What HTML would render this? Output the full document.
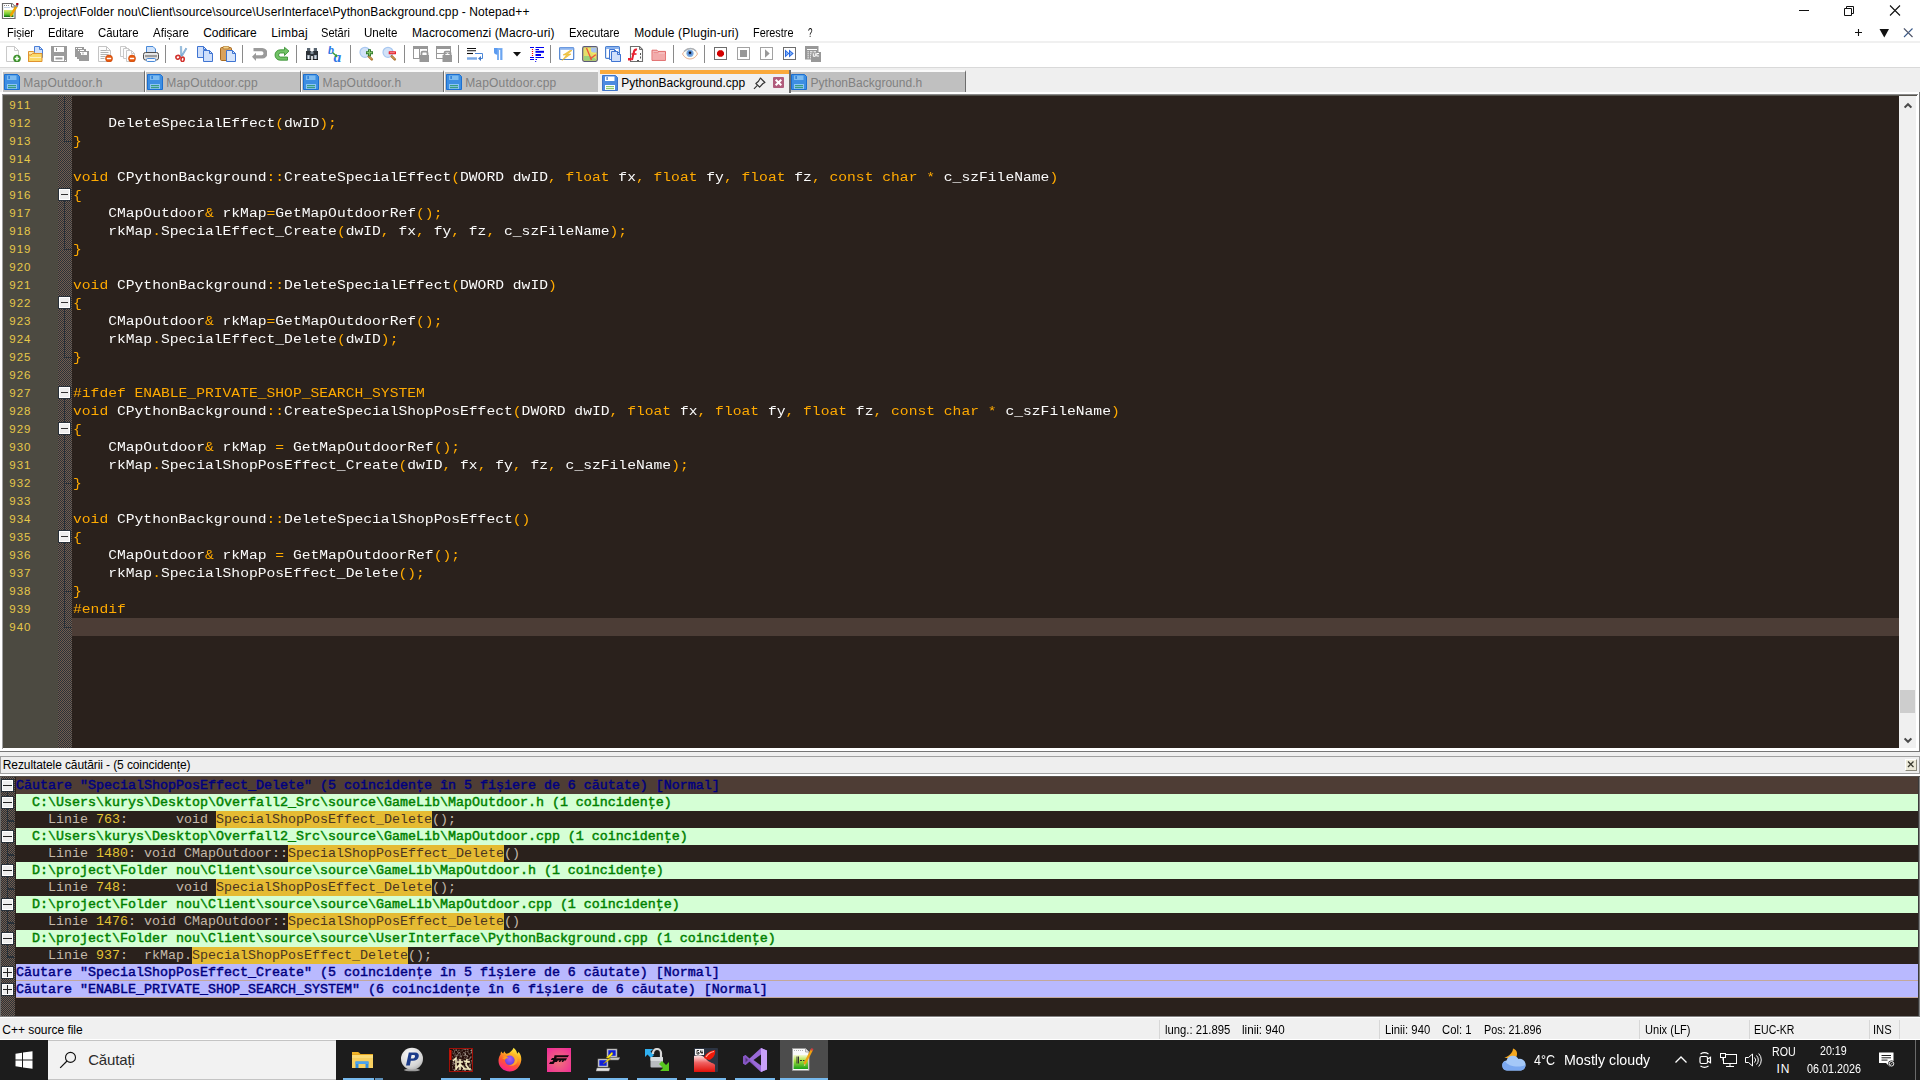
<!DOCTYPE html>
<html><head><meta charset="utf-8"><title>Notepad++</title>
<style>
*{box-sizing:border-box;margin:0;padding:0}
html,body{width:1920px;height:1080px;overflow:hidden;background:#fff;font-family:"Liberation Sans",sans-serif;font-size:12px;color:#000}
.abs{position:absolute}
.t{position:absolute;white-space:nowrap}
#titlebar{position:absolute;left:0;top:0;width:1920px;height:23px;background:#fff}
#menubar{position:absolute;left:0;top:23px;width:1920px;height:19px;background:#fff}
#tbline1{position:absolute;left:0;top:41px;width:1920px;height:2px;background:#f0f0f0}
#toolbar{position:absolute;left:0;top:43px;width:1920px;height:24px;background:#fff}
.ti{position:absolute;top:3px}
.tsep{position:absolute;top:2px;width:1px;height:18px;background:#8a8a8a}
#tbline2{position:absolute;left:0;top:67px;width:1920px;height:1px;background:#d9d9d9}
#tabbar{position:absolute;left:0;top:68px;width:1920px;height:24px;background:#efefef}
.tab{position:absolute;top:2px;height:22px;background:#c0c0c0;border-right:1px solid #6d6d6d;border-top:2px solid #fafafa;box-shadow:-1px 0 0 #fafafa}
.tab.act{background:#f0f0f0;top:2px;height:23px;border-right:2px solid #6d6d6d;border-top:0;box-shadow:none}
.tab.act::before{content:"";position:absolute;left:0;top:0;right:0;height:4px;background:#faa93b;border-bottom:0}
.tab.act::after{content:"";position:absolute;left:0;top:4px;right:0;height:1px;background:#eaf0fa}
/* editor */
#edframe{position:absolute;left:0;top:92px;width:1920px;height:660px;background:#fff;border-right:1px solid #7a7a7a;border-bottom:1px solid #767676}
#edframe::before{content:"";position:absolute;left:2px;top:2px;width:1915px;height:654px;border-left:1px solid #a0a0a0;border-top:1px solid #8a8a8a}
#edframe::after{content:"";position:absolute;left:3px;top:3px;width:1914px;height:1px;background:#55534c}
#editor{position:absolute;left:3px;top:96px;width:1896px;height:652px;background:#2a211c;overflow:hidden}
#gutter{position:absolute;left:0;top:0;width:55px;height:652px;background:#4c4a41}
#foldm{position:absolute;left:55px;top:0;width:14px;height:652px;background:repeating-conic-gradient(#735c4e 0 25%,#2a3238 0 50%) 0 0/2px 2px}
.ln{position:absolute;left:6.3px;height:18px;line-height:18px;font-size:11.5px;color:#e6c84a;letter-spacing:1px;font-kerning:none}
.cl{position:absolute;left:70px;height:18px;line-height:18px;font-family:"Liberation Mono",monospace;font-size:14.667px;color:#fbfbfb;white-space:pre;width:1826px}
.cl.cur{background:#4c3d36;left:69px;width:1827px}
.cl .k{color:#ffaa00}.cl .o{color:#ffaa00}
.cl s{display:inline-block;text-decoration:none;transform:scaleY(.86);transform-origin:0 13.6px}
.fbox{position:absolute;left:56px;width:11px;height:11px;background:#eeeeee;border:1px solid #fff;outline:1px solid #283038}
.fbox i{position:absolute;left:1px;top:4px;width:7px;height:1px;background:#333}
.fv{position:absolute;left:61px;width:1px;background:#283038}
.fh{position:absolute;left:61px;width:7px;height:1px;background:#283038}
/* scrollbar */
#vsb{position:absolute;left:1899px;top:96px;width:17px;height:652px;background:#f0f0f0}
#vsb .thumb{position:absolute;left:1px;top:594px;width:15px;height:23px;background:#cdcdcd}
/* search panel */
#srtitle{position:absolute;left:0;top:756px;width:1920px;height:18px;background:#eeeeee;border:1px solid #a0a0a0}
#srgap{position:absolute;left:0;top:774px;width:1920px;height:3px;background:#fff;border-bottom:1px solid #55504c}
#srx{position:absolute;left:1904px;top:2px;width:12px;height:12px;background:#ece9d8;border-top:1px solid #fff;border-left:1px solid #fff;border-right:1px solid #8a887a;border-bottom:1px solid #8a887a}
#srx svg{position:absolute;left:-1px;top:-1px}
#split1{position:absolute;left:0;top:752px;width:1920px;height:4px;background:#f0f0f0}
.sv{position:absolute;left:7px;width:1px;background:#283038}
.sh{position:absolute;left:7px;width:7px;height:2px;background:#283038}
#srp{position:absolute;left:0;top:777px;width:1920px;height:239px;background:#2a211c;overflow:hidden;border-right:1px solid #808080}
#srp::after{content:"";position:absolute;left:1918px;top:0;width:1px;height:239px;background:#3a3a3a}
#srm{position:absolute;left:0;top:0;width:15px;height:239px;background:repeating-conic-gradient(#735c4e 0 25%,#2a3238 0 50%) 1px 0/2px 2px;border-left:1px solid #707070}
.sr{position:absolute;left:16px;width:1902px;height:17px;line-height:17px;font-family:"Liberation Mono",monospace;font-size:13.333px;white-space:pre;color:#c4b9aa}
.sr.hdr1{background:#4e3d35;color:#000080;-webkit-text-stroke:.45px #000080}
.sr.hdr{background:#b9b9ff;color:#000080;-webkit-text-stroke:.45px #000080;border-bottom:1px solid #c4a89a;line-height:17px}
.sr.file{background:#d5ffd5;color:#008000;-webkit-text-stroke:.45px #008000}
.sr.hit .num{color:#e4c436}
.sr.hit .hl{background:#e5bb33;color:#4a3520;display:inline-block;height:17px}
.fb{position:absolute;left:2px;width:11px;height:11px;background:#eeeeee;border:1px solid #fff;outline:1px solid #283038}
.fb .h{position:absolute;left:0px;top:4px;width:9px;height:1px;background:#222}
.fb .v{position:absolute;left:4px;top:0px;width:1px;height:9px;background:#222}
/* status */
#status{position:absolute;left:0;top:1016px;width:1920px;height:24px;background:#f0f0f0;border-top:1px solid #828282;border-bottom:1px solid #fff;box-shadow:inset 0 1px 0 #fff}
#status i{position:absolute;top:3px;width:1px;height:19px;background:#d7d7d7}
/* taskbar */
#taskbar{position:absolute;left:0;top:1040px;width:1920px;height:40px;background:#1c1c1c}
#tsearch{position:absolute;left:48px;top:0;width:288px;height:40px;background:#f2f2f2;border-top:1px solid #c4c4c4;border-bottom:1px solid #c4c4c4}
.tk{position:absolute;color:#fff;white-space:nowrap;transform-origin:0 0}
.ul{position:absolute;top:38px;height:2px;background:#76b9ed}
</style></head><body>
<div id="titlebar">
<svg class="abs" style="left:1px;top:2px" width="20" height="18" viewBox="0 0 20 18"><path d="M1.500 1.500h9.500l3 3v12h-12.500z" fill="#fff" stroke="#6a6a6a" stroke-width="1.200"/><path d="M10.500 1.500v3.500h3.500" fill="#fff" stroke="#6a6a6a" stroke-width="1"/><path d="M3 3.500h1M5 3.500h1M7 3.500h1" stroke="#8a8a8a" stroke-width="1"/><path d="M3 5.500h6" stroke="#c4d4e8" stroke-width="1"/><defs><linearGradient id="gn" x1="0" y1="0" x2="0" y2="1"><stop offset="0" stop-color="#d8e860"/><stop offset=".6" stop-color="#6cc830"/><stop offset="1" stop-color="#0a6a10"/></linearGradient></defs><rect x="3" y="8" width="9.500" height="7" fill="url(#gn)"/><path d="M16 3.500L9.500 14" stroke="#f0a400" stroke-width="2.400"/><path d="M16.300 2.800l-1.300 2" stroke="#7a90b0" stroke-width="2.200"/><rect x="15.200" y="1" width="2.200" height="2.200" fill="#a80010"/><path d="M9.500 14l-1 1.800 1.800-.8z" fill="#e8d0a0"/></svg>
<span class="t" style="left:23.70px;top:5px;font-size:12px;line-height:15px;letter-spacing:0.093px;color:#000;font-weight:normal;">D:\project\Folder nou\Client\source\source\UserInterface\PythonBackground.cpp - Notepad++</span>
<svg class="abs" style="left:1790px;top:0" width="130" height="23" viewBox="0 0 130 23" fill="none" stroke="#111" stroke-width="1"><path d="M9 10.500h10"/><path d="M54.500 8.500h7v7h-7z"/><path d="M56.500 8.500v-2h7v7h-2"/><path d="M100 5.500l10 10M110 5.500l-10 10" stroke-width="1.100"/></svg>
</div>
<div id="menubar">
<span class="t" style="left:7.00px;top:3px;font-size:12px;line-height:15px;transform:scaleX(0.9204);transform-origin:0 0;color:#000;font-weight:normal;">Fișier</span>
<span class="t" style="left:48.00px;top:3px;font-size:12px;line-height:15px;transform:scaleX(0.9388);transform-origin:0 0;color:#000;font-weight:normal;">Editare</span>
<span class="t" style="left:98.20px;top:3px;font-size:12px;line-height:15px;transform:scaleX(0.9484);transform-origin:0 0;color:#000;font-weight:normal;">Căutare</span>
<span class="t" style="left:153.00px;top:3px;font-size:12px;line-height:15px;transform:scaleX(0.9609);transform-origin:0 0;color:#000;font-weight:normal;">Afișare</span>
<span class="t" style="left:203.20px;top:3px;font-size:12px;line-height:15px;letter-spacing:-0.061px;color:#000;font-weight:normal;">Codificare</span>
<span class="t" style="left:271.20px;top:3px;font-size:12px;line-height:15px;letter-spacing:0.223px;color:#000;font-weight:normal;">Limbaj</span>
<span class="t" style="left:321.20px;top:3px;font-size:12px;line-height:15px;transform:scaleX(0.9224);transform-origin:0 0;color:#000;font-weight:normal;">Setări</span>
<span class="t" style="left:364.20px;top:3px;font-size:12px;line-height:15px;transform:scaleX(0.9653);transform-origin:0 0;color:#000;font-weight:normal;">Unelte</span>
<span class="t" style="left:412.00px;top:3px;font-size:12px;line-height:15px;letter-spacing:0.108px;color:#000;font-weight:normal;">Macrocomenzi (Macro-uri)</span>
<span class="t" style="left:569.20px;top:3px;font-size:12px;line-height:15px;transform:scaleX(0.9346);transform-origin:0 0;color:#000;font-weight:normal;">Executare</span>
<span class="t" style="left:634.20px;top:3px;font-size:12px;line-height:15px;letter-spacing:0.174px;color:#000;font-weight:normal;">Module (Plugin-uri)</span>
<span class="t" style="left:753.20px;top:3px;font-size:12px;line-height:15px;transform:scaleX(0.9066);transform-origin:0 0;color:#000;font-weight:normal;">Ferestre</span>
<span class="t" style="left:808.30px;top:3px;font-size:12px;line-height:15px;transform:scaleX(0.6714);transform-origin:0 0;color:#000;font-weight:normal;">?</span>
<svg class="abs" style="left:1850px;top:2px" width="70" height="16" viewBox="0 0 70 16"><path d="M8.500 4v7M5 7.500h7" stroke="#111" stroke-width="1.100"/><path d="M29.500 4h9.500l-4.700 8.500z" fill="#111"/><path d="M54 3.500l8.500 8.500M62.500 3.500L54 12" stroke="#3a5a8a" stroke-width="1.100"/><path d="M54 3.500l8.500 8.500" stroke="#9a6a3a" stroke-width=".6"/></svg>
</div>
<div id="tbline1"></div><div id="toolbar"><svg class="ti" style="left:5px" width="16" height="16" viewBox="0 0 16 16"><path d="M1.5 0.5h8l4 4v11h-12z" fill="#fdfdfd" stroke="#c9c9c9"/><path d="M9.5 0.5v4h4" fill="none" stroke="#c9c9c9"/><circle cx="12" cy="12.5" r="3.5" fill="#3f9a2b" stroke="#2f7a20" stroke-width=".6"/><path d="M12 10.3v4.4M9.8 12.5h4.4" stroke="#fff" stroke-width="1.5"/></svg>
<svg class="ti" style="left:28px" width="16" height="16" viewBox="0 0 16 16"><path d="M6.5 0.5h5l3 3v8h-8z" fill="#cfe0fb" stroke="#4b7fd6"/><path d="M11.5 0.5v3h3" fill="none" stroke="#4b7fd6"/><path d="M.5 5.5h5l1 1.5h0v8.5h-6z" fill="#fbe7a8" stroke="#e0922f"/><path d="M.5 15.5v-6.5h2.5l1.5-1.5h9.5v8z" fill="#fbd968" stroke="#e0922f"/><path d="M2 11h11v1H2z" fill="#fdf0c0"/></svg>
<svg class="ti" style="left:51px" width="16" height="16" viewBox="0 0 16 16"><path d="M0 0h15l1 0v16h-15l-1-1z" fill="#9b9b9b"/><rect x="3" y="1" width="10" height="5" fill="#fff"/><rect x="5" y="2" width="1" height="3" fill="#9b9b9b"/><rect x="3" y="10" width="10" height="5" fill="#fff"/><rect x="4.5" y="11.5" width="7" height="2" fill="#9b9b9b"/><rect x="14" y="14" width="1" height="1" fill="#fff"/></svg>
<svg class="ti" style="left:74px" width="16" height="16" viewBox="0 0 16 16"><rect x="1" y="1" width="9" height="10" fill="#9b9b9b"/><rect x="4" y="2" width="4" height="1.4" fill="#fff"/><rect x="2" y="2" width="1" height="1" fill="#fff"/><rect x="3" y="3" width="9" height="10" fill="#9b9b9b"/><rect x="6" y="4" width="4" height="1.4" fill="#fff"/><rect x="4" y="4" width="1" height="1" fill="#fff"/><rect x="5" y="5" width="10" height="10" fill="#9b9b9b"/><rect x="8" y="6" width="5" height="1.4" fill="#fff"/><rect x="6" y="6" width="1" height="1" fill="#fff"/><rect x="7" y="6" width="6" height="3" fill="#fff"/><rect x="8.5" y="6.5" width="1" height="2" fill="#9b9b9b"/></svg>
<svg class="ti" style="left:97px" width="16" height="16" viewBox="0 0 16 16"><path d="M1.5 0.5h8l4 4v11h-12z" fill="#fdfdfd" stroke="#c4c4c4"/><path d="M9.5 0.5v4h4" fill="none" stroke="#c4c4c4"/><path d="M3.5 4.5h6M3.5 6.5h8M3.5 8.5h8M3.5 10.5h5M3.5 12.5h4" stroke="#a9a9a9" stroke-width=".9"/><circle cx="12" cy="12.5" r="3.5" fill="#e8580c" stroke="#c54306" stroke-width=".6"/><path d="M9.8 12.5h4.4" stroke="#fff" stroke-width="1.5"/></svg>
<svg class="ti" style="left:120px" width="16" height="16" viewBox="0 0 16 16"><path d="M0.5 0.5h5l3 3v7h-8z" fill="#fdfdfd" stroke="#c9c9c9"/><path d="M5.5 0.5v3h3" fill="none" stroke="#c9c9c9"/><path d="M3.5 2.5h5l3 3v7h-8z" fill="#fdfdfd" stroke="#c9c9c9"/><path d="M8.5 2.5v3h3" fill="none" stroke="#c9c9c9"/><path d="M6.5 4.5h5l3 3v8h-8z" fill="#fdfdfd" stroke="#c9c9c9"/><path d="M11.5 4.5v3h3" fill="none" stroke="#c9c9c9"/><circle cx="12" cy="12.5" r="3.5" fill="#e8580c" stroke="#c54306" stroke-width=".6"/><path d="M9.8 12.5h4.4" stroke="#fff" stroke-width="1.5"/></svg>
<svg class="ti" style="left:143px" width="16" height="16" viewBox="0 0 16 16"><path d="M3.5 7V.5h6.5l2.5 2.5V7z" fill="#cfe2fa" stroke="#4a8ad8"/><rect x=".5" y="6.5" width="15" height="7.5" rx="2" fill="#e6e6e6" stroke="#4d4d4d"/><rect x="2" y="9" width="12" height="2.2" fill="#9c9c9c"/><rect x="3.5" y="12.5" width="9" height="3" rx="1" fill="#f4f8ff" stroke="#4a8ad8"/></svg>
<svg class="ti" style="left:174px" width="16" height="16" viewBox="0 0 16 16"><path d="M6.3 0.3L7.6 0.3L8 10L6.6 11z" fill="#9fc4e4" stroke="#6a9cc6" stroke-width=".5"/><path d="M11.8 2L12.8 2.8L8.3 10.2L7.4 9.4z" fill="#9fc4e4" stroke="#4f86bb" stroke-width=".5"/><ellipse cx="4" cy="11.3" rx="2.1" ry="1.8" fill="none" stroke="#d2322d" stroke-width="1.6" transform="rotate(-20 4 11.3)"/><ellipse cx="8.6" cy="13.3" rx="1.6" ry="2.2" fill="none" stroke="#d2322d" stroke-width="1.6" transform="rotate(10 8.6 13.3)"/></svg>
<svg class="ti" style="left:197px" width="16" height="16" viewBox="0 0 16 16"><path d="M0.5 0.5h6l3 3v8h-9z" fill="#cfdffa" stroke="#3f74d2"/><path d="M6.5 0.5v3h3" fill="none" stroke="#3f74d2"/><path d="M6.5 4.5h6l3 3v8h-9z" fill="#cfdffa" stroke="#3f74d2"/><path d="M12.5 4.5v3h3" fill="none" stroke="#3f74d2"/></svg>
<svg class="ti" style="left:220px" width="16" height="16" viewBox="0 0 16 16"><rect x=".5" y="1.5" width="11" height="13" rx="1.2" fill="#d9a25c" stroke="#a86b22"/><rect x="3" y=".3" width="6" height="2.6" rx=".8" fill="#f3d48a" stroke="#a86b22" stroke-width=".7"/><path d="M6.5 4.5h6l3 3v8h-9z" fill="#d6e5fb" stroke="#3f74d2"/><path d="M12.5 4.5v3h3" fill="none" stroke="#3f74d2"/></svg>
<svg class="ti" style="left:251px" width="16" height="16" viewBox="0 0 16 16"><path d="M1 11l4-4v2.6h5.5a2 2 0 0 0 0-4H2.5v-3.3h8.8a5 5 0 0 1 0 10.4H5v2.6z" fill="#9a9a9a" transform="translate(0 -.3)"/></svg>
<svg class="ti" style="left:274px" width="16" height="16" viewBox="0 0 16 16"><path d="M15 4.5L10.5 .7v2.5H6.2a5.2 5.2 0 0 0 0 10.4h7.3v-3.2H6.6a2 2 0 0 1 0-4h3.9v2.5z" fill="#72c267" stroke="#2f8a2a" stroke-width=".8" transform="translate(0 .6)"/></svg>
<svg class="ti" style="left:305px" width="16" height="16" viewBox="0 0 16 16"><path d="M2 2h3.2v3H2zM8.8 2H12v3H8.8z" fill="#5a6672"/><path d="M1 5h5.2v3H7.8V5H13v9H7.8v-4H6.200v4H1z" fill="#2c3238"/><path d="M5.5 5.5h3v2.5h-3z" fill="#7f8b96"/><path d="M2 9h3.2v4.2H2zM8.800 9H12v4.200H8.800z" fill="#8d99a6"/><path d="M3 9.500h1v3.500H3zM9.800 9.500h1v3.500h-1z" fill="#e6eaee"/><path d="M1 13.200h5.200v.8H1zM7.800 13.200H13v.8H7.800z" fill="#111"/></svg>
<svg class="ti" style="left:328px" width="16" height="16" viewBox="0 0 16 16"><text x="0" y="8" font-family="Liberation Serif" font-style="italic" font-weight="bold" font-size="12" fill="#2d79e6">b</text><text x="5.500" y="15.800" font-family="Liberation Serif" font-style="italic" font-weight="bold" font-size="15.500" fill="#2d79e6">a</text><path d="M4.500 6.500l4 3.500" stroke="#3a9a3a" stroke-width="1.500"/><path d="M9.500 11.200l-3.300-.6 2.500-2.600z" fill="#3a9a3a"/></svg>
<svg class="ti" style="left:359px" width="16" height="16" viewBox="0 0 16 16"><circle cx="6" cy="6.300" r="5" fill="#d2e2f8" stroke="#a9c8f0" stroke-width="1.200"/><path d="M9.800 10.300l3 3" stroke="#a9702c" stroke-width="2.600" stroke-linecap="round"/><path d="M10 10.500l2.600 2.600" stroke="#e0b070" stroke-width="1" stroke-linecap="round"/><path d="M10.500 3.200v7M7 6.700h7" stroke="#2f7a2a" stroke-width="3"/><path d="M10.500 4v5.400M7.800 6.700h5.400" stroke="#86c46f" stroke-width="1.200"/></svg>
<svg class="ti" style="left:382px" width="16" height="16" viewBox="0 0 16 16"><circle cx="6" cy="6.300" r="5" fill="#d2e2f8" stroke="#a9c8f0" stroke-width="1.200"/><path d="M9.800 10.300l3 3" stroke="#a9702c" stroke-width="2.600" stroke-linecap="round"/><path d="M10 10.500l2.600 2.600" stroke="#e0b070" stroke-width="1" stroke-linecap="round"/><rect x="6.700" y="5.200" width="7.300" height="3" rx=".5" fill="#e8202a"/><rect x="7.800" y="6.300" width="5" height=".9" fill="#f6a0a0"/></svg>
<svg class="ti" style="left:413px" width="16" height="16" viewBox="0 0 16 16"><rect x=".5" y=".5" width="14" height="12" fill="#fff" stroke="#989898"/><rect x="0" y="0" width="15" height="3" fill="#989898"/><path d="M6.500 3v10" stroke="#989898"/><rect x="6.500" y="9" width="10" height="7" fill="#989898"/><path d="M8.500 9.500v-2.500a1.300 1.300 0 0 1 1.300-1.300h3.400a1.300 1.300 0 0 1 1.300 1.300v2.500" fill="none" stroke="#989898" stroke-width="1.800"/><path d="M9.500 9l2-2 2 2z" fill="#fff"/></svg>
<svg class="ti" style="left:436px" width="16" height="16" viewBox="0 0 16 16"><rect x=".5" y=".5" width="14" height="12" fill="#fff" stroke="#989898"/><rect x="0" y="0" width="15" height="3" fill="#989898"/><path d="M0 7.500h15" stroke="#989898"/><rect x="6.500" y="9" width="10" height="7" fill="#989898"/><path d="M8.500 9.500v-2.500a1.300 1.300 0 0 1 1.300-1.300h3.400a1.300 1.300 0 0 1 1.300 1.300v2.500" fill="none" stroke="#989898" stroke-width="1.800"/><path d="M9.500 9l2-2 2 2z" fill="#fff"/></svg>
<svg class="ti" style="left:467px" width="16" height="16" viewBox="0 0 16 16"><path d="M0 2.500h9M0 4.800h9" stroke="#111" stroke-width="1.100"/><path d="M0 7.500h6" stroke="#111" stroke-width="1.100"/><path d="M8 7.500h7.500v5h-3" fill="none" stroke="#4a86d8" stroke-width="1"/><path d="M11 12.500l3-2.500v5z" fill="#3f78c8"/><rect x="0" y="11" width="10" height="3" fill="#9cc0ee"/><rect x="0" y="12" width="10" height="1" fill="#7aa8e4"/></svg>
<svg class="ti" style="left:490px" width="16" height="16" viewBox="0 0 16 16"><path d="M4 2h8.500v12h-2V4h-1.500v10h-2V8.500A3.300 3.300 0 0 1 4 5.200z" fill="#7db0f2"/><path d="M4 2h3.500v6.500A3.300 3.300 0 0 1 4 5.200z" fill="#5a9af0"/><path d="M11 3v11" stroke="#5a9af0" stroke-width="1"/></svg>
<svg class="ti" style="left:529px" width="16" height="16" viewBox="0 0 16 16"><path d="M1 1.500h4M6.500 1.500h8.500" stroke="#0000f0" stroke-width="1.200"/><path d="M6.500 3.500h3.500" stroke="#0000f0" stroke-width="1"/><path d="M6.500 5.800h8.500" stroke="#0000f0" stroke-width="2"/><path d="M6.500 9h5.500" stroke="#0000f0" stroke-width="2"/><path d="M1 11.500h4M6.500 11.500h8.500M1 13.500h4M6.500 13.500h1.500" stroke="#0000f0" stroke-width="1.200"/><rect x="6.200" y="15" width="1" height="1" fill="#0000f0"/><path d="M3.500 3v7" stroke="#f00" stroke-width="1.200" stroke-dasharray="1 1"/></svg>
<svg class="ti" style="left:559px" width="16" height="16" viewBox="0 0 16 16"><rect x=".7" y="1.500" width="14" height="12" rx="1" fill="#fff" stroke="#4a80d0" stroke-width="1.200"/><rect x="1" y="1.500" width="13.500" height="2.300" fill="#8db4ee"/><path d="M11 4.500L4 9h3.500L3 14.500l9-6.500H8.500L13 4.500z" fill="#f2cb4a" stroke="#e0a820" stroke-width=".5"/></svg>
<svg class="ti" style="left:582px" width="16" height="16" viewBox="0 0 16 16"><rect x=".7" y=".7" width="14.600" height="14.600" rx="1.500" fill="#e6de6a" stroke="#5a5a78" stroke-width="1.200"/><rect x="9" y="1.500" width="5.600" height="5" fill="#a9c4ee"/><path d="M2 10h7l5 3v1.500H2z" fill="#9ad27a"/><path d="M4.500 2l5 12M8 13l6-4.500" stroke="#f0523a" stroke-width="1.300"/><path d="M6 2l4 5 4.500 1" stroke="#f6ee60" stroke-width="1" fill="none"/></svg>
<svg class="ti" style="left:605px" width="16" height="16" viewBox="0 0 16 16"><rect x=".6" y=".6" width="13.800" height="11.800" rx="1" fill="#fff" stroke="#4a80d0" stroke-width="1.200"/><rect x="1" y="1" width="13" height="2" fill="#8db4ee"/><path d="M4.5 3.5h5l3 3v7h-8z" fill="#e6effc" stroke="#3f74d2"/><path d="M9.5 3.5v3h3" fill="none" stroke="#3f74d2"/><path d="M6.5 5.5h6l3 3v7h-9z" fill="#cfdffa" stroke="#3f74d2"/><path d="M12.5 5.5v3h3" fill="none" stroke="#3f74d2"/></svg>
<svg class="ti" style="left:628px" width="16" height="16" viewBox="0 0 16 16"><path d="M2.500 .5h9l3 3v12h-12z" fill="#fff" stroke="#6e6e6e" stroke-width="1.100"/><path d="M11.500 .5v3h3" fill="none" stroke="#6e6e6e"/><path d="M12.500 7v6M11 14.500h-3" stroke="#555" stroke-width="1" stroke-dasharray="2 1.500"/><path d="M9 3.500c-2.500-.5-3 1.500-3.500 4l-1.500 6.500" stroke="#e82030" stroke-width="2" fill="none"/><path d="M3.500 8h5" stroke="#e82030" stroke-width="1.600"/><rect x="0" y="12" width="3.500" height="2.500" fill="#e82030"/></svg>
<svg class="ti" style="left:651px" width="16" height="16" viewBox="0 0 16 16"><path d="M1 4.200h5l1 1.200h7.500v9h-13.500z" fill="#f4bcbc" stroke="#e06a6a" stroke-width="1"/><path d="M1.500 8h13v6h-13z" fill="#f0a0a0" opacity=".6"/><path d="M2.500 6.800h5" stroke="#e88080" stroke-width="1"/></svg>
<svg class="ti" style="left:682px" width="16" height="16" viewBox="0 0 16 16"><path d="M.5 8C3 3.500 6 2.500 8.500 2.500S14 4 15.500 8c-2 3.500-4.500 5-7.500 5S2.500 11.500.5 8z" fill="#fdfdf6" stroke="#e8b090" stroke-width="1"/><path d="M2 5.500C4.500 3 6.500 2.500 8.500 2.500s4 .8 5.500 2.500" fill="none" stroke="#a8b0b8" stroke-width="1.300"/><circle cx="8" cy="7.300" r="3.600" fill="#7aaae0"/><circle cx="8" cy="7.300" r="2.300" fill="#5a8ad0"/><circle cx="8" cy="6.800" r="1.200" fill="#101018"/></svg>
<svg class="ti" style="left:713px" width="16" height="16" viewBox="0 0 16 16"><rect x="1.500" y="1.500" width="12" height="12" fill="#fff" stroke="#6e6e6e" stroke-width="1"/><path d="M6 4.300h3l2 2v2.400l-2 2h-3l-2-2V6.300z" fill="#d40000"/></svg>
<svg class="ti" style="left:736px" width="16" height="16" viewBox="0 0 16 16"><rect x="1.500" y="1.500" width="12" height="12" fill="#fff" stroke="#a2a2a2" stroke-width="1"/><rect x="4" y="4" width="7" height="7" fill="#989898"/></svg>
<svg class="ti" style="left:759px" width="16" height="16" viewBox="0 0 16 16"><rect x="1.500" y="1.500" width="12" height="12" fill="#fff" stroke="#a2a2a2" stroke-width="1"/><path d="M6 3.300L10.700 7.500 6 11.700z" fill="#989898"/></svg>
<svg class="ti" style="left:782px" width="16" height="16" viewBox="0 0 16 16"><rect x="1.500" y="1.500" width="12" height="12" fill="#fff" stroke="#6e6e6e" stroke-width="1"/><path d="M3 3.500L7.400 7.500 3 11.500zM7 3.500L11.700 7.500 7 11.500z" fill="#2a6ae0"/><path d="M4 5.500L6.200 7.500 4 9.500zM8 5.500L10.200 7.500 8 9.500z" fill="#7fb0f6"/></svg>
<svg class="ti" style="left:805px" width="16" height="16" viewBox="0 0 16 16"><rect x="0" y="0" width="13.500" height="13.500" fill="#989898"/><rect x="6" y="6" width="10" height="10" fill="#989898"/><path d="M2 3.500h10" stroke="#fff" stroke-width="1"/><path d="M2.500 5.800h1.300M5 5.800h2.500M8.500 5.800h2.500M2.500 7.800h1.300M5 7.800h1.500M2.500 9.800h1.300M5 9.800h1M2.500 11.800h1.300M5 11.800h1" stroke="#fff" stroke-width="1"/><path d="M8.300 7.300v3h2v-3M11.500 7.500h2.500M11.500 10h2.500M11.800 7.500v2.500" stroke="#fff" stroke-width="1" fill="none"/></svg>
<i class="tsep" style="left:165px"></i>
<i class="tsep" style="left:242px"></i>
<i class="tsep" style="left:296px"></i>
<i class="tsep" style="left:350px"></i>
<i class="tsep" style="left:404px"></i>
<i class="tsep" style="left:458px"></i>
<i class="tsep" style="left:550px"></i>
<i class="tsep" style="left:673px"></i>
<i class="tsep" style="left:704px"></i>
<svg class="ti" style="left:513px;top:9px" width="8" height="5" viewBox="0 0 8 5"><path d="M0 0h8L4 4.500z" fill="#111"/></svg></div><div id="tbline2"></div>
<div id="edframe"></div>
<div id="tabbar">
<div class="tab" style="left:3px;width:142px"></div>
<svg class="abs" style="left:4px;top:6px" width="16" height="16" viewBox="0 0 16 16"><path d="M.5 .5h13l2 2v13h-15z" fill="#3d8ee2" stroke="#1b6fd0" stroke-width="1"/><rect x="3" y="1.500" width="9.500" height="4.500" fill="#7dbbf0"/><rect x="4.500" y="2" width="1.200" height="3" fill="#1b6fd0"/><rect x="3" y="10" width="10" height="5" fill="#8cc5f5"/><rect x="4" y="11" width="8" height="1.200" fill="#3a9d80"/><rect x="4" y="13" width="8" height="1.200" fill="#3a9d80"/></svg>
<span class="t" style="left:23.30px;top:7.5px;font-size:12px;line-height:15px;letter-spacing:0.275px;color:#808080;font-weight:normal;">MapOutdoor.h</span>
<div class="tab" style="left:146px;width:155px"></div>
<svg class="abs" style="left:147px;top:6px" width="16" height="16" viewBox="0 0 16 16"><path d="M.5 .5h13l2 2v13h-15z" fill="#3d8ee2" stroke="#1b6fd0" stroke-width="1"/><rect x="3" y="1.500" width="9.500" height="4.500" fill="#7dbbf0"/><rect x="4.500" y="2" width="1.200" height="3" fill="#1b6fd0"/><rect x="3" y="10" width="10" height="5" fill="#8cc5f5"/><rect x="4" y="11" width="8" height="1.200" fill="#3a9d80"/><rect x="4" y="13" width="8" height="1.200" fill="#3a9d80"/></svg>
<span class="t" style="left:166.30px;top:7.5px;font-size:12px;line-height:15px;letter-spacing:0.204px;color:#808080;font-weight:normal;">MapOutdoor.cpp</span>
<div class="tab" style="left:302px;width:142px"></div>
<svg class="abs" style="left:303px;top:6px" width="16" height="16" viewBox="0 0 16 16"><path d="M.5 .5h13l2 2v13h-15z" fill="#3d8ee2" stroke="#1b6fd0" stroke-width="1"/><rect x="3" y="1.500" width="9.500" height="4.500" fill="#7dbbf0"/><rect x="4.500" y="2" width="1.200" height="3" fill="#1b6fd0"/><rect x="3" y="10" width="10" height="5" fill="#8cc5f5"/><rect x="4" y="11" width="8" height="1.200" fill="#3a9d80"/><rect x="4" y="13" width="8" height="1.200" fill="#3a9d80"/></svg>
<span class="t" style="left:322.50px;top:7.5px;font-size:12px;line-height:15px;letter-spacing:0.248px;color:#808080;font-weight:normal;">MapOutdoor.h</span>
<div class="tab" style="left:445px;width:153px;border-right:0"></div>
<svg class="abs" style="left:446px;top:6px" width="16" height="16" viewBox="0 0 16 16"><path d="M.5 .5h13l2 2v13h-15z" fill="#3d8ee2" stroke="#1b6fd0" stroke-width="1"/><rect x="3" y="1.500" width="9.500" height="4.500" fill="#7dbbf0"/><rect x="4.500" y="2" width="1.200" height="3" fill="#1b6fd0"/><rect x="3" y="10" width="10" height="5" fill="#8cc5f5"/><rect x="4" y="11" width="8" height="1.200" fill="#3a9d80"/><rect x="4" y="13" width="8" height="1.200" fill="#3a9d80"/></svg>
<span class="t" style="left:465.20px;top:7.5px;font-size:12px;line-height:15px;letter-spacing:0.181px;color:#808080;font-weight:normal;">MapOutdoor.cpp</span>
<div class="tab act" style="left:600px;width:191px"></div>
<svg class="abs" style="left:602px;top:6.5px" width="16" height="16" viewBox="0 0 16 16"><path d="M.5 .5h13l2 2v13h-15z" fill="#4c8ae0" stroke="#3f74c8" stroke-width="1"/><rect x="3" y="1.500" width="9.500" height="4.500" fill="#ffffff"/><rect x="4.500" y="2" width="1.200" height="3" fill="#3f74c8"/><rect x="3" y="10" width="10" height="5" fill="#ffffff"/><rect x="4" y="11" width="8" height="1.200" fill="#8fc86a"/><rect x="4" y="13" width="8" height="1.200" fill="#8fc86a"/></svg>
<span class="t" style="left:621.30px;top:7.5px;font-size:12px;line-height:15px;letter-spacing:-0.011px;color:#000;font-weight:normal;">PythonBackground.cpp</span>
<svg class="abs" style="left:753px;top:8.600px" width="13" height="13" viewBox="0 0 13 13" fill="none" stroke="#333" stroke-width="1.150"><path d="M7.400 1L11.900 5.500 10 6.500 6.600 10.100 2.900 6.500 5.500 4.200z" stroke-linejoin="round"/><path d="M4.400 8.400L1 11.800"/></svg>
<svg class="abs" style="left:773px;top:9px" width="12" height="11" viewBox="0 0 12 11"><rect width="11" height="11" rx="1" fill="#b05c7c"/><path d="M2.700 2.700l5.600 5.600M8.300 2.700L2.700 8.300" stroke="#fff" stroke-width="2"/></svg>
<div class="tab" style="left:791px;width:175px;box-shadow:none"></div>
<svg class="abs" style="left:791px;top:6px" width="16" height="16" viewBox="0 0 16 16"><path d="M.5 .5h13l2 2v13h-15z" fill="#3d8ee2" stroke="#1b6fd0" stroke-width="1"/><rect x="3" y="1.500" width="9.500" height="4.500" fill="#7dbbf0"/><rect x="4.500" y="2" width="1.200" height="3" fill="#1b6fd0"/><rect x="3" y="10" width="10" height="5" fill="#8cc5f5"/><rect x="4" y="11" width="8" height="1.200" fill="#3a9d80"/><rect x="4" y="13" width="8" height="1.200" fill="#3a9d80"/></svg>
<span class="t" style="left:810.60px;top:7.5px;font-size:12px;line-height:15px;letter-spacing:0.010px;color:#808080;font-weight:normal;">PythonBackground.h</span>
</div>
<div id="editor">
<div id="gutter"></div><div id="foldm"></div>
<div class="fv" style="top:0px;height:46px"></div>
<div class="fh" style="top:45px"></div>
<div class="fbox" style="top:93px"><i></i></div>
<div class="fv" style="top:104px;height:50px"></div>
<div class="fh" style="top:153px"></div>
<div class="fbox" style="top:201px"><i></i></div>
<div class="fv" style="top:212px;height:50px"></div>
<div class="fh" style="top:261px"></div>
<div class="fbox" style="top:291px"><i></i></div>
<div class="fv" style="top:302px;height:25px"></div>
<div class="fbox" style="top:327px"><i></i></div>
<div class="fv" style="top:338px;height:97px"></div>
<div class="fh" style="top:387px"></div>
<div class="fbox" style="top:435px"><i></i></div>
<div class="fv" style="top:446px;height:86px"></div>
<div class="fh" style="top:495px"></div>
<div class="fh" style="top:531px"></div>
<div class="ln" style="top:0px">911</div>
<div class="ln" style="top:18px">912</div>
<div class="ln" style="top:36px">913</div>
<div class="ln" style="top:54px">914</div>
<div class="ln" style="top:72px">915</div>
<div class="ln" style="top:90px">916</div>
<div class="ln" style="top:108px">917</div>
<div class="ln" style="top:126px">918</div>
<div class="ln" style="top:144px">919</div>
<div class="ln" style="top:162px">920</div>
<div class="ln" style="top:180px">921</div>
<div class="ln" style="top:198px">922</div>
<div class="ln" style="top:216px">923</div>
<div class="ln" style="top:234px">924</div>
<div class="ln" style="top:252px">925</div>
<div class="ln" style="top:270px">926</div>
<div class="ln" style="top:288px">927</div>
<div class="ln" style="top:306px">928</div>
<div class="ln" style="top:324px">929</div>
<div class="ln" style="top:342px">930</div>
<div class="ln" style="top:360px">931</div>
<div class="ln" style="top:378px">932</div>
<div class="ln" style="top:396px">933</div>
<div class="ln" style="top:414px">934</div>
<div class="ln" style="top:432px">935</div>
<div class="ln" style="top:450px">936</div>
<div class="ln" style="top:468px">937</div>
<div class="ln" style="top:486px">938</div>
<div class="ln" style="top:504px">939</div>
<div class="ln" style="top:522px">940</div>
<div class="cl" style="top:0px"></div>
<div class="cl" style="top:18px"><s>    DeleteSpecialEffect<span class="o">(</span>dwID<span class="o">);</span></s></div>
<div class="cl" style="top:36px"><s><span class="o">}</span></s></div>
<div class="cl" style="top:54px"></div>
<div class="cl" style="top:72px"><s><span class="k">void</span> CPythonBackground<span class="o">::</span>CreateSpecialEffect<span class="o">(</span>DWORD dwID<span class="o">,</span> <span class="k">float</span> fx<span class="o">,</span> <span class="k">float</span> fy<span class="o">,</span> <span class="k">float</span> fz<span class="o">,</span> <span class="k">const</span> <span class="k">char</span> <span class="o">*</span> c_szFileName<span class="o">)</span></s></div>
<div class="cl" style="top:90px"><s><span class="o">{</span></s></div>
<div class="cl" style="top:108px"><s>    CMapOutdoor<span class="o">&amp;</span> rkMap<span class="o">=</span>GetMapOutdoorRef<span class="o">();</span></s></div>
<div class="cl" style="top:126px"><s>    rkMap<span class="o">.</span>SpecialEffect_Create<span class="o">(</span>dwID<span class="o">,</span> fx<span class="o">,</span> fy<span class="o">,</span> fz<span class="o">,</span> c_szFileName<span class="o">);</span></s></div>
<div class="cl" style="top:144px"><s><span class="o">}</span></s></div>
<div class="cl" style="top:162px"></div>
<div class="cl" style="top:180px"><s><span class="k">void</span> CPythonBackground<span class="o">::</span>DeleteSpecialEffect<span class="o">(</span>DWORD dwID<span class="o">)</span></s></div>
<div class="cl" style="top:198px"><s><span class="o">{</span></s></div>
<div class="cl" style="top:216px"><s>    CMapOutdoor<span class="o">&amp;</span> rkMap<span class="o">=</span>GetMapOutdoorRef<span class="o">();</span></s></div>
<div class="cl" style="top:234px"><s>    rkMap<span class="o">.</span>SpecialEffect_Delete<span class="o">(</span>dwID<span class="o">);</span></s></div>
<div class="cl" style="top:252px"><s><span class="o">}</span></s></div>
<div class="cl" style="top:270px"></div>
<div class="cl" style="top:288px"><s><span class="k">#ifdef ENABLE_PRIVATE_SHOP_SEARCH_SYSTEM</span></s></div>
<div class="cl" style="top:306px"><s><span class="k">void</span> CPythonBackground<span class="o">::</span>CreateSpecialShopPosEffect<span class="o">(</span>DWORD dwID<span class="o">,</span> <span class="k">float</span> fx<span class="o">,</span> <span class="k">float</span> fy<span class="o">,</span> <span class="k">float</span> fz<span class="o">,</span> <span class="k">const</span> <span class="k">char</span> <span class="o">*</span> c_szFileName<span class="o">)</span></s></div>
<div class="cl" style="top:324px"><s><span class="o">{</span></s></div>
<div class="cl" style="top:342px"><s>    CMapOutdoor<span class="o">&amp;</span> rkMap <span class="o">=</span> GetMapOutdoorRef<span class="o">();</span></s></div>
<div class="cl" style="top:360px"><s>    rkMap<span class="o">.</span>SpecialShopPosEffect_Create<span class="o">(</span>dwID<span class="o">,</span> fx<span class="o">,</span> fy<span class="o">,</span> fz<span class="o">,</span> c_szFileName<span class="o">);</span></s></div>
<div class="cl" style="top:378px"><s><span class="o">}</span></s></div>
<div class="cl" style="top:396px"></div>
<div class="cl" style="top:414px"><s><span class="k">void</span> CPythonBackground<span class="o">::</span>DeleteSpecialShopPosEffect<span class="o">()</span></s></div>
<div class="cl" style="top:432px"><s><span class="o">{</span></s></div>
<div class="cl" style="top:450px"><s>    CMapOutdoor<span class="o">&amp;</span> rkMap <span class="o">=</span> GetMapOutdoorRef<span class="o">();</span></s></div>
<div class="cl" style="top:468px"><s>    rkMap<span class="o">.</span>SpecialShopPosEffect_Delete<span class="o">();</span></s></div>
<div class="cl" style="top:486px"><s><span class="o">}</span></s></div>
<div class="cl" style="top:504px"><s><span class="k">#endif</span></s></div>
<div class="cl cur" style="top:522px"></div>
</div>
<div id="vsb"><div class="thumb"></div><svg class="abs" style="left:4.500px;top:5.500px" width="8" height="7" viewBox="0 0 8 7"><path d="M.600 5.600L4 2.200 7.400 5.600" fill="none" stroke="#4a4a4a" stroke-width="2"/></svg><svg class="abs" style="left:4.500px;top:640.500px" width="8" height="7" viewBox="0 0 8 7"><path d="M.600 1.400L4 4.800 7.400 1.400" fill="none" stroke="#4a4a4a" stroke-width="2"/></svg></div>
<div id="split1"></div>
<div id="srtitle">
<span class="t" style="left:1.80px;top:1px;font-size:12px;line-height:15px;letter-spacing:-0.101px;color:#000;font-weight:normal;">Rezultatele căutării - (5 coincidențe)</span>
<div id="srx"><svg width="12" height="11" viewBox="0 0 12 11"><path d="M3 2.500l5.500 5.500M8.500 2.500L3 8" stroke="#3a3a30" stroke-width="1.300"/></svg></div>
</div><div id="srgap"></div>
<div id="srp">
<div id="srm"></div>
<div class="sv" style="top:14px;height:166px"></div>
<div class="sh" style="top:43px"></div>
<div class="sh" style="top:77px"></div>
<div class="sh" style="top:111px"></div>
<div class="sh" style="top:145px"></div>
<div class="sh" style="top:179px"></div>
<div class="sr hdr1" style="top:0px">Căutare "SpecialShopPosEffect_Delete" (5 coincidențe în 5 fișiere de 6 căutate) [Normal]</div>
<div class="fb" style="top:3px"><i class="h"></i></div>
<div class="sr file" style="top:17px">  C:\Users\kurys\Desktop\Overfall2_Src\source\GameLib\MapOutdoor.h (1 coincidențe)</div>
<div class="fb" style="top:20px"><i class="h"></i></div>
<div class="sr hit" style="top:34px">    Linie <span class="num">763</span>:      void <span class="hl">SpecialShopPosEffect_Delete</span>();</div>
<div class="sr file" style="top:51px">  C:\Users\kurys\Desktop\Overfall2_Src\source\GameLib\MapOutdoor.cpp (1 coincidențe)</div>
<div class="fb" style="top:54px"><i class="h"></i></div>
<div class="sr hit" style="top:68px">    Linie <span class="num">1480</span>: void CMapOutdoor::<span class="hl">SpecialShopPosEffect_Delete</span>()</div>
<div class="sr file" style="top:85px">  D:\project\Folder nou\Client\source\source\GameLib\MapOutdoor.h (1 coincidențe)</div>
<div class="fb" style="top:88px"><i class="h"></i></div>
<div class="sr hit" style="top:102px">    Linie <span class="num">748</span>:      void <span class="hl">SpecialShopPosEffect_Delete</span>();</div>
<div class="sr file" style="top:119px">  D:\project\Folder nou\Client\source\source\GameLib\MapOutdoor.cpp (1 coincidențe)</div>
<div class="fb" style="top:122px"><i class="h"></i></div>
<div class="sr hit" style="top:136px">    Linie <span class="num">1476</span>: void CMapOutdoor::<span class="hl">SpecialShopPosEffect_Delete</span>()</div>
<div class="sr file" style="top:153px">  D:\project\Folder nou\Client\source\source\UserInterface\PythonBackground.cpp (1 coincidențe)</div>
<div class="fb" style="top:156px"><i class="h"></i></div>
<div class="sr hit" style="top:170px">    Linie <span class="num">937</span>:  rkMap.<span class="hl">SpecialShopPosEffect_Delete</span>();</div>
<div class="sr hdr" style="top:187px">Căutare "SpecialShopPosEffect_Create" (5 coincidențe în 5 fișiere de 6 căutate) [Normal]</div>
<div class="fb" style="top:190px"><i class="h"></i><i class="v"></i></div>
<div class="sr hdr" style="top:204px">Căutare "ENABLE_PRIVATE_SHOP_SEARCH_SYSTEM" (6 coincidențe în 6 fișiere de 6 căutate) [Normal]</div>
<div class="fb" style="top:207px"><i class="h"></i><i class="v"></i></div>
</div>
<div id="status">
<span class="t" style="left:2.30px;top:6px;font-size:12px;line-height:15px;letter-spacing:-0.024px;color:#000;font-weight:normal;">C++ source file</span>
<span class="t" style="left:1164.50px;top:6px;font-size:12px;line-height:15px;transform:scaleX(0.9395);transform-origin:0 0;color:#000;font-weight:normal;">lung.: 21.895</span>
<span class="t" style="left:1242.00px;top:6px;font-size:12px;line-height:15px;transform:scaleX(0.9695);transform-origin:0 0;color:#000;font-weight:normal;">linii: 940</span>
<span class="t" style="left:1384.50px;top:6px;font-size:12px;line-height:15px;transform:scaleX(0.9408);transform-origin:0 0;color:#000;font-weight:normal;">Linii: 940</span>
<span class="t" style="left:1442.00px;top:6px;font-size:12px;line-height:15px;transform:scaleX(0.9377);transform-origin:0 0;color:#000;font-weight:normal;">Col: 1</span>
<span class="t" style="left:1484.30px;top:6px;font-size:12px;line-height:15px;transform:scaleX(0.8963);transform-origin:0 0;color:#000;font-weight:normal;">Pos: 21.896</span>
<span class="t" style="left:1644.50px;top:6px;font-size:12px;line-height:15px;transform:scaleX(0.9222);transform-origin:0 0;color:#000;font-weight:normal;">Unix (LF)</span>
<span class="t" style="left:1754.30px;top:6px;font-size:12px;line-height:15px;transform:scaleX(0.8784);transform-origin:0 0;color:#000;font-weight:normal;">EUC-KR</span>
<span class="t" style="left:1873.30px;top:6px;font-size:12px;line-height:15px;transform:scaleX(0.9316);transform-origin:0 0;color:#000;font-weight:normal;">INS</span>
<i style="left:1159px"></i>
<i style="left:1379px"></i>
<i style="left:1639px"></i>
<i style="left:1749px"></i>
<i style="left:1869px"></i>
<i style="left:1899px"></i>
</div>
<div id="taskbar">
<svg class="abs" style="left:15px;top:11px" width="18" height="18" viewBox="0 0 18 18"><path d="M.5 2.700L7 1.700v6.800H.500zM8 1.600L17.500 .200v8.300H8zM.500 9.500H7v6.800L.500 15.300zM8 9.500h9.500v8.300L8 16.400z" fill="#fff"/></svg>
<div id="tsearch"></div>
<svg class="abs" style="left:58px;top:10px" width="20" height="20" viewBox="0 0 20 20"><circle cx="12.500" cy="7.400" r="5" fill="none" stroke="#111" stroke-width="1.100"/><path d="M9 11L2.200 17.800" stroke="#111" stroke-width="1.200"/></svg>
<span class="t" style="left:88.20px;top:11px;font-size:15px;line-height:18px;letter-spacing:-0.149px;color:#2b2b2b;font-weight:normal;">Căutați</span>
<div class="abs" style="left:780px;top:0;width:48px;height:40px;background:#4c4c4c"></div>
<svg class="abs" style="left:351px;top:9px" width="24" height="22" viewBox="0 0 24 22"><path d="M1 3.500h7l1.500 1.500H22v4H1z" fill="#e8a820"/><path d="M1 3h6.500v2H1z" fill="#f0b428"/><path d="M1 6h21v13H1z" fill="#f8d060"/><path d="M1 6h21v3H1z" fill="#fbdc78"/><path d="M4.500 19v-6.500h13V19h-3v-4h-7v4z" fill="#2f8de0"/><path d="M4.500 12.500h13v2.500h-13z" fill="#4ba4f0"/></svg>
<svg class="abs" style="left:400px;top:7px" width="24" height="25" viewBox="0 0 24 25"><ellipse cx="12" cy="23" rx="8" ry="1.300" fill="#9a9a9a"/><defs><radialGradient id="pm" cx=".4" cy=".3" r=".8"><stop offset="0" stop-color="#fafafa"/><stop offset=".7" stop-color="#d4d4d4"/><stop offset="1" stop-color="#a8a8a8"/></radialGradient></defs><circle cx="12" cy="11.700" r="11" fill="url(#pm)"/><path d="M8.800 5.500h6.200c3 0 4.300 1.800 3.700 4.300-.6 2.700-2.800 4-5.700 4h-2.200l-1 4.700H6zm2.800 2.600l-.8 3.500h1.700c1.300 0 2.200-.6 2.500-1.800.3-1.100-.3-1.700-1.500-1.700z" fill="#1c3c8a"/></svg>
<svg class="abs" style="left:449px;top:8px" width="24" height="24" viewBox="0 0 24 24"><defs><filter id="nz" x="0" y="0" width="1" height="1"><feTurbulence type="fractalNoise" baseFrequency=".45" numOctaves="2" seed="7"/><feColorMatrix values="0 0 0 0 .75  0 0 0 0 .7  0 0 0 0 .62  1.8 0 0 0 -.75"/></filter></defs><rect width="24" height="24" fill="#a01008"/><rect x="1" y="1" width="22" height="22" fill="#240c08"/><rect x="3" y="1.500" width="19.500" height="21" filter="url(#nz)"/><path d="M1.500 2v10" stroke="#d81808" stroke-width="2"/><path d="M4 13l3-3v12M8 14h6M11 11v11M11 16l-4 5M11 16l5 5M15 13l6 1M18 11l-1 6 4 5M14 21h8" stroke="#f2ecc0" stroke-width="1.500" fill="none"/></svg>
<svg class="abs" style="left:497px;top:7px" width="26" height="26" viewBox="0 0 26 26"><defs><linearGradient id="ff1" x1=".7" y1="0" x2=".25" y2="1"><stop offset="0" stop-color="#fff044"/><stop offset=".3" stop-color="#ffb020"/><stop offset=".6" stop-color="#ff5a30"/><stop offset=".85" stop-color="#ff3070"/><stop offset="1" stop-color="#e020a0"/></linearGradient><radialGradient id="ff2" cx=".5" cy=".35" r=".7"><stop offset="0" stop-color="#b060f0"/><stop offset="1" stop-color="#5a3ae0"/></radialGradient></defs><path d="M16.500 .8c2.500 2 3.500 4.200 3.600 6 .8-.6 1.200-1.300 1.300-2 2.200 2.300 3.300 5.500 2.800 9C23.300 20 18.500 24.500 12.800 24.500 6.300 24.500 1.500 19.800 1.500 13.800c0-2.600.8-4.800 2-6.300 0-1.200.3-2.300 1-3 .3 1 .9 1.700 1.700 2 .2-1 .8-1.800 1.500-2.200.1 1.200.7 2 1.800 2.400 1.500-.2 3-.9 4-2C15 3.500 16.200 2.300 16.500.8z" fill="url(#ff1)"/><circle cx="12.800" cy="13.300" r="4.800" fill="url(#ff2)"/><path d="M5.500 9.500c2.500-.6 4.700 0 6 1.700-1.600-.2-2.800.3-3.300 1.300-1.300 0-2.300-.5-3-1.400.6-.3 1.500-.4 2.300-.2-.5-.7-1.200-1.100-2-1.400z" fill="#ff9a20"/><path d="M14.500 8.200c2.600.8 4 3.200 3.300 5.800-.7 2.800-3.500 4.400-6.300 3.800 3.500 2.400 8.200.3 9-3.800.5-2.600-.6-5.200-2.700-6.500z" fill="#ffb030" opacity=".8"/></svg>
<svg class="abs" style="left:547px;top:8px" width="24" height="24" viewBox="0 0 24 24"><defs><radialGradient id="fz" cx=".5" cy=".55" r=".7"><stop offset="0" stop-color="#f07478"/><stop offset="1" stop-color="#f02c98"/></radialGradient></defs><rect width="24" height="24" fill="url(#fz)"/><path d="M7.500 7.300H22l-1.300 2H9.800l-.6 1H20l-1.200 2.200h-1.700l-1 1.600h-1.600l1-1.600h-1.300l-1 1.600h-1.600l1-1.600H10.900l-1 1.600H7.800L6.500 16H2l1.300-2.200h2l1-1.800H3.800l1.200-2h2z" fill="#12060c"/></svg>
<svg class="abs" style="left:596px;top:8px" width="24" height="24" viewBox="0 0 24 24"><rect x="11" y="1" width="10" height="8" fill="#d8d8d8" stroke="#888" stroke-width=".6"/><rect x="12.300" y="2.200" width="7.400" height="5.600" fill="#1020d8"/><path d="M14 9.500h10l-1.500 2.500H12z" fill="#c8c8c8" stroke="#777" stroke-width=".5"/><rect x="2" y="11" width="10" height="8" fill="#d8d8d8" stroke="#888" stroke-width=".6"/><rect x="3.300" y="12.200" width="7.400" height="5.600" fill="#1020d8"/><path d="M1 20h13l-1 3H0z" fill="#e4e4e4" stroke="#888" stroke-width=".5"/><path d="M16 4l-6 6h3l-6 6 8-5h-3l5-5z" fill="#f8e820" stroke="#a08000" stroke-width=".4"/></svg>
<svg class="abs" style="left:644px;top:8px" width="26" height="24" viewBox="0 0 26 24"><path d="M1 1h8L6.500 3.500 10 7 7 10 3.500 6.500 1 9z" fill="#30b0f0"/><path d="M9 6v-1a4 4 0 0 1 8 0v4" fill="none" stroke="#d8d8d8" stroke-width="2.200"/><rect x="6.500" y="9" width="12.500" height="10.500" rx="1" fill="#b8bcc0"/><rect x="6.500" y="9" width="12.500" height="4" rx="1" fill="#d8dcde"/><path d="M25 23h-9l3-3-4-4 3-3 4 4 3-3z" fill="#58c820"/></svg>
<svg class="abs" style="left:694px;top:8px" width="24" height="24" viewBox="0 0 24 24"><defs><linearGradient id="rd" x1="0" y1="0" x2="0" y2="1"><stop offset="0" stop-color="#fff0f0"/><stop offset=".45" stop-color="#f06060"/><stop offset="1" stop-color="#e01008"/></linearGradient></defs><rect width="24" height="24" rx="1" fill="#2c3442"/><path d="M0 8c6-2 10 0 13 4 3 3 7 3 8 5v7H0z" fill="url(#rd)"/><path d="M10 10c1-4 5-7 11-8 1 4-2 9-6 10z" fill="#f01808"/><path d="M12 9c2-3 5-5 8-5.500" stroke="#ffb0a0" stroke-width="1.200" fill="none"/><rect x="1" y="1" width="9" height="6" fill="#f4f4f4"/><path d="M5 2.500H3v3.500h2V4.500H4M6.500 2.500v2H9M8 2.500v3.500" stroke="#222" stroke-width=".9" fill="none"/></svg>
<svg class="abs" style="left:743px;top:8px" width="25" height="24" viewBox="0 0 25 24"><path d="M18 0l6 2.500v19L18 24 6.500 13.500 2.500 17 0 15.500v-7L2.500 7l4 3.500z" fill="#9a6ad8"/><path d="M18 0l6 2.500v19L18 24z" fill="#c8a0f8"/><path d="M18 6.500v11L10.500 12z" fill="#1c1c1c"/><path d="M2.500 9.500v5L5 12z" fill="#1c1c1c"/><path d="M0 8.500L2.500 7 18 24l-11.500-10.500L2.500 17 0 15.500z" fill="#7a4ab8" opacity=".6"/></svg>
<svg class="abs" style="left:791px;top:7px" width="25" height="25" viewBox="0 0 25 25"><defs><linearGradient id="np" x1="0" y1="0" x2="0" y2="1"><stop offset="0" stop-color="#f4f8d0"/><stop offset=".4" stop-color="#a8e040"/><stop offset="1" stop-color="#18a018"/></linearGradient></defs><path d="M1.500 1.500h13l3.500 3.500v18.500h-16.500z" fill="#fafafa" stroke="#9a9a9a" stroke-width="1"/><path d="M14.500 1.500V5H18" fill="#e4e4e4" stroke="#9a9a9a" stroke-width=".8"/><path d="M3 3.500h10" stroke="#b0b0b0" stroke-width="1" stroke-dasharray="1 1"/><rect x="2.500" y="8" width="14.500" height="14" fill="url(#np)"/><path d="M6 9.500v7M7.500 9.500v7" stroke="#333" stroke-width="1"/><path d="M9 13.500h2M12 13.500h1.500" stroke="#333" stroke-width="1"/><path d="M21 2.500L13.500 17" stroke="#f0a010" stroke-width="2.400"/><path d="M21.500 1.500l-1 2" stroke="#d04040" stroke-width="2.200"/><path d="M13.500 17l-.8 2.200 1.900-1.300z" fill="#e8d0a0"/></svg>
<div class="ul" style="left:343px;width:31px;background:#76b9ed"></div>
<div class="ul" style="left:375px;width:8px;background:#5b8fb9"></div>
<div class="ul" style="left:441px;width:40px;background:#76b9ed"></div>
<div class="ul" style="left:490px;width:40px;background:#76b9ed"></div>
<div class="ul" style="left:588px;width:40px;background:#76b9ed"></div>
<div class="ul" style="left:637px;width:40px;background:#76b9ed"></div>
<div class="ul" style="left:686px;width:40px;background:#76b9ed"></div>
<div class="ul" style="left:735px;width:40px;background:#76b9ed"></div>
<div class="ul" style="left:780px;width:48px;background:#76b9ed"></div>
<svg class="abs" style="left:1501px;top:7px" width="26" height="25" viewBox="0 0 26 25"><path d="M12 1.500c3.500 1 5 4.500 3.500 8C14 12.500 10 13 7.500 11.500 6 11 4.500 10.500 3 11c1.500-1 4-1.500 6-3.500 2-2 3-4 3-6z" fill="#f4a820"/><path d="M6 23.500a5 5 0 0 1-.5-9.900 6.500 6.500 0 0 1 12-1.600 5.800 5.800 0 0 1 2.500 11.500z" fill="#a4c8f8"/><path d="M6 23.500a5 5 0 0 1-2-9.500c2 4 8 6 15 5.500 2-.2 4-.8 5.500-1.800a5.800 5.800 0 0 1-4.500 5.800z" fill="#7aa8f0"/></svg>
<span class="t" style="left:1534.00px;top:11px;font-size:15px;line-height:18px;transform:scaleX(0.8366);transform-origin:0 0;color:#fff;font-weight:normal;">4°C</span>
<span class="t" style="left:1563.70px;top:11px;font-size:15px;line-height:18px;transform:scaleX(0.9484);transform-origin:0 0;color:#fff;font-weight:normal;">Mostly cloudy</span>
<svg class="abs" style="left:1674px;top:15px" width="14" height="9" viewBox="0 0 14 9"><path d="M1.500 7.500L7 2l5.500 5.500" fill="none" stroke="#fff" stroke-width="1.300"/></svg>
<svg class="abs" style="left:1699px;top:12px" width="13" height="16" viewBox="0 0 13 16"><rect x="1" y="4.500" width="7.500" height="7" rx="1.500" fill="none" stroke="#fff" stroke-width="1.200"/><path d="M8.500 7l3-1.800v5.600l-3-1.800" fill="none" stroke="#fff" stroke-width="1.200"/><path d="M1.500 2c2.200-1.500 5.800-1.500 8 0M1.500 14c2.200 1.500 5.800 1.500 8 0" fill="none" stroke="#fff" stroke-width="1.100"/></svg>
<svg class="abs" style="left:1720px;top:13px" width="18" height="15" viewBox="0 0 18 15"><rect x="3.500" y="1.500" width="13" height="9" fill="none" stroke="#fff" stroke-width="1"/><path d="M10 10.500v3M6 13.500h8" stroke="#fff" stroke-width="1"/><rect x=".5" y=".5" width="5" height="4" fill="#1c1c1c" stroke="#fff" stroke-width="1"/><path d="M3 4.500v3" stroke="#fff" stroke-width="1"/></svg>
<svg class="abs" style="left:1744px;top:12px" width="19" height="16" viewBox="0 0 19 16"><path d="M1.500 5.500h3l4-3.500v12l-4-3.500h-3z" fill="none" stroke="#fff" stroke-width="1"/><path d="M10.500 5.500a3.500 3.500 0 0 1 0 5M12.500 3.500a6.500 6.500 0 0 1 0 9M14.700 1.500a9.500 9.500 0 0 1 0 13" fill="none" stroke="#fff" stroke-width="1"/></svg>
<span class="t" style="left:1771.50px;top:4.5px;font-size:12px;line-height:15px;transform:scaleX(0.8885);transform-origin:0 0;color:#fff;font-weight:normal;">ROU</span>
<span class="t" style="left:1776.50px;top:21.5px;font-size:12px;line-height:15px;letter-spacing:0.866px;color:#fff;font-weight:normal;">IN</span>
<span class="t" style="left:1820.00px;top:3.5px;font-size:12px;line-height:15px;transform:scaleX(0.8895);transform-origin:0 0;color:#fff;font-weight:normal;">20:19</span>
<span class="t" style="left:1807.00px;top:21.5px;font-size:12px;line-height:15px;transform:scaleX(0.8976);transform-origin:0 0;color:#fff;font-weight:normal;">06.01.2026</span>
<svg class="abs" style="left:1878px;top:11px" width="18" height="18" viewBox="0 0 18 18"><path d="M1 1.500h14.500v10.500H12v4l-4-4H1z" fill="#fff"/><path d="M3.500 4.500h9.500M3.500 6.800h9.500M3.500 9.100h6" stroke="#1c1c1c" stroke-width="1"/><circle cx="13.500" cy="12.800" r="3.300" fill="#1c1c1c"/><circle cx="13.500" cy="12.800" r="2.300" fill="none" stroke="#fff" stroke-width=".9"/><path d="M12.500 13.800l2-2" stroke="#fff" stroke-width=".8"/></svg>
<div class="abs" style="left:1915px;top:0;width:1px;height:40px;background:#6a6a6a"></div>
</div>
</body></html>
